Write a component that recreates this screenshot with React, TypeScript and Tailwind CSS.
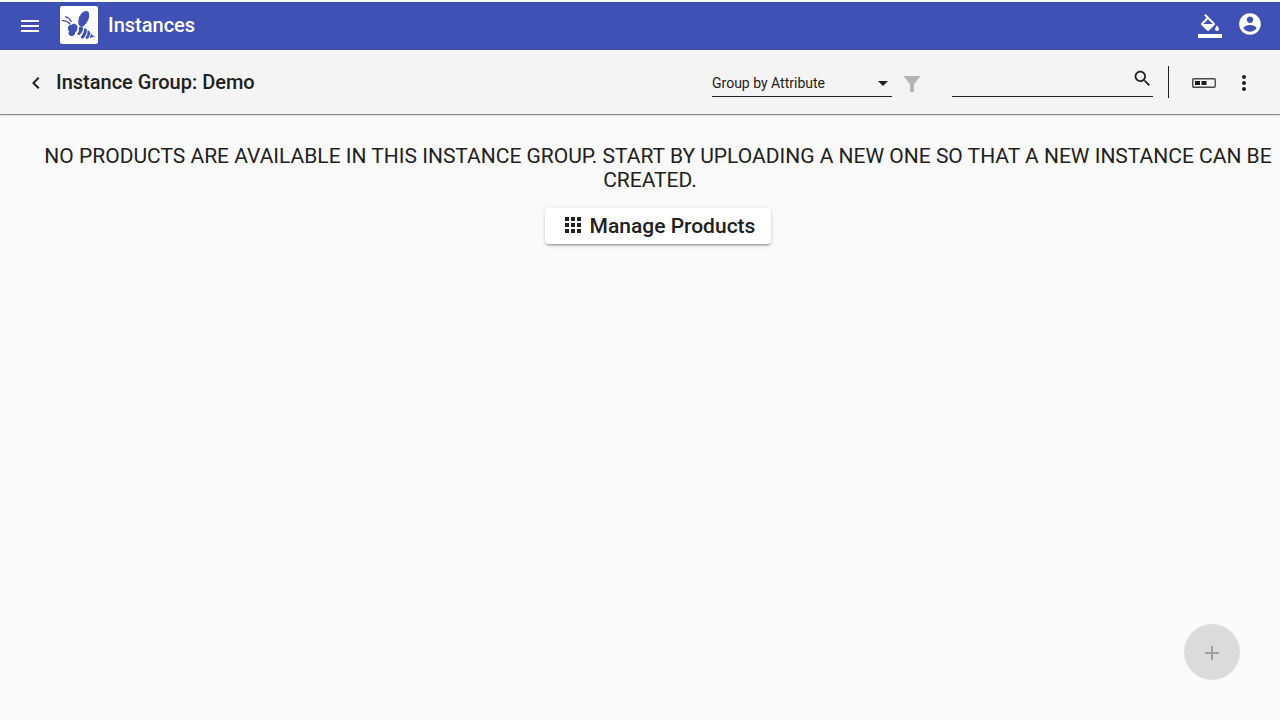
import type { ReactNode } from "react";

function Icon({ className, children }: { className: string; children: ReactNode }) {
  return (
    <svg viewBox="0 0 24 24" fill="currentColor" aria-hidden="true" className={`block shrink-0 ${className}`}>
      {children}
    </svg>
  );
}

function BeeLogo() {
  return (
    <svg viewBox="0 0 38 38" aria-hidden="true" className="block size-[38px] shrink-0">
      <rect width="38" height="38" rx="2" fill="#fff" />
      <g fill="#3f51b5">
        <path d="M20.600 20.800C18.200 19.400 17.800 16 18.800 12.600 19.900 8.600 23 5 26.400 5c2.400.2 3.200 2.600 2.700 5.800-.6 3.800-3.400 8-6.300 9.800-.8.400-1.600.500-2.200.2z" />
        <path d="M8.200 20.600c.6-1.400 2-1.800 3.200-1.600.8-1.200 2.600-1.600 4.200-.8 1.800 1 2.400 3.400 1.600 5.600-.4 1.200-1.200 2.200-2.200 2.800.2 1.600-.8 3.200-2.600 3.400-2 .2-3.800-1-4-2.600-.1-.8.400-1.200 1-1.400-1.400-1.200-1.800-3.400-1.200-5.400z" />
        <path d="M18.800 21.400c1.600-.6 4.200-.4 4.300 1.200.2 2.200-1.600 5-4 6.600-1 .2-1.900-.5-1.700-1.400 1.400-1.800 2-4 1.400-6.400z" />
        <path d="M24.200 22.200c1.500 0 2.700.9 2.700 2.200 0 2.800-1.500 5.800-3.600 8-1.300.2-2.800-.5-2.600-1.500 2.200-2.400 3.500-5.400 3.500-8.700z" />
        <path d="M27.600 24.200c1.500.5 2.500 1.500 2.500 2.800 0 2-.9 4.200-2.200 5.700-1.200.2-2.500-.4-2.400-1.200 1.500-2 2.200-4.400 2.100-7.300z" />
        <path d="M30.700 26.200c.6 2 2 3.600 4.900 4.400-2 .1-4.200.8-6 1.900.9-1.900 1.300-4 1.100-6.300z" />
      </g>
      <g fill="none" stroke="#3f51b5" strokeLinecap="round">
        <path d="M2.400 14.600c3-.2 5.600 1 7.600 3.400" strokeWidth="1.300" />
        <path d="M5.600 10.600c2.800 1 4.600 2.600 5.600 5" strokeWidth="1.300" />
      </g>
    </svg>
  );
}

function TopBar() {
  return (
    <header className="mt-0.5 flex h-12 items-center bg-[#3f51b5] pr-[17px] pl-[18px] text-white">
      <button type="button" aria-label="Open menu">
        <Icon className="size-6">
          <path d="M3 18h18v-2H3v2zm0-5h18v-2H3v2zm0-7v2h18V6H3z" />
        </Icon>
      </button>
      <div className="ml-[18px] flex items-center gap-2.5 pb-0.5">
        <BeeLogo />
        <h1 className="text-xl leading-6 font-medium">Instances</h1>
      </div>
      <div className="ml-auto flex items-center gap-[15px]">
        <button type="button" aria-label="Change theme">
          <Icon className="size-6">
            <path d="M16.56 8.94L7.62 0 6.21 1.41l2.38 2.38-5.15 5.15c-.59.59-.59 1.54 0 2.12l5.5 5.5c.29.29.68.44 1.06.44s.77-.15 1.06-.44l5.5-5.5c.59-.58.59-1.53 0-2.12zM5.21 10L10 5.21 14.79 10H5.21zM19 11.5s-2 2.17-2 3.5c0 1.1.9 2 2 2s2-.9 2-2c0-1.33-2-3.5-2-3.5zM0 20h24v4H0z" />
          </Icon>
        </button>
        <button type="button" aria-label="User account" className="pb-1">
          <Icon className="size-[26px]">
            <path d="M12 2C6.48 2 2 6.48 2 12s4.48 10 10 10 10-4.48 10-10S17.52 2 12 2zm0 3c1.66 0 3 1.34 3 3s-1.34 3-3 3-3-1.34-3-3 1.34-3 3-3zm0 14.2c-2.5 0-4.71-1.28-6-3.22.03-1.99 4-3.08 6-3.08 1.99 0 5.97 1.09 6 3.08-1.29 1.94-3.5 3.22-6 3.22z" />
          </Icon>
        </button>
      </div>
    </header>
  );
}

function Toolbar() {
  return (
    <div className="z-10 flex h-16 items-center bg-[#f4f4f4] pr-6 pl-6 shadow-[0_1px_1px_rgba(0,0,0,0.4),0_1px_3px_rgba(0,0,0,0.12)]">
      <button type="button" aria-label="Back" className="pt-0.5">
        <Icon className="size-6">
          <path d="M15.41 7.41L14 6l-6 6 6 6 1.41-1.41L10.83 12z" />
        </Icon>
      </button>
      <h2 className="ml-2 text-xl leading-6 font-medium">Instance Group: Demo</h2>

      <div className="ml-auto flex h-8 items-stretch">
        <div className="mb-px grid w-[180px] grid-cols-1 border-b border-[#212121]">
          <select
            aria-label="Group by Attribute"
            className="col-start-1 row-start-1 appearance-none bg-transparent pt-1 text-sm outline-none"
          >
            <option>Group by Attribute</option>
          </select>
          <svg
            viewBox="0 0 10 5"
            fill="currentColor"
            aria-hidden="true"
            className="pointer-events-none col-start-1 row-start-1 mt-[15px] mr-1 h-[5px] w-2.5 justify-self-end"
          >
            <path d="M0 0h10L5 5z" />
          </svg>
        </div>
        <button type="button" disabled aria-label="Filter" className="ml-3 pt-1 text-[#b4b4b4]">
          <svg viewBox="0 0 16 16" fill="currentColor" className="block size-4" aria-hidden="true">
            <path d="M.6 0h14.8c.6 0 .8.600.4 1.100L10 8.300V15.400c0 .4-.2.600-.6.600H6.600c-.4 0-.6-.2-.6-.6V8.300L.2 1.100C-.2.600 0 0 .6 0z" />
          </svg>
        </button>
        <div className="mb-px ml-8 flex w-[201px] border-b border-[#212121]">
          <input type="text" aria-label="Search" className="min-w-0 flex-1 bg-transparent text-sm outline-none" />
          <Icon className="mt-0.5 size-[21px]">
            <path d="M15.5 14h-.79l-.28-.27C15.410 12.590 16 11.110 16 9.500 16 5.910 13.090 3 9.500 3S3 5.910 3 9.500 5.910 16 9.500 16c1.610 0 3.090-.59 4.230-1.570l.27.28v.79l5 4.990L20.490 19l-4.990-5zm-6 0C7.010 14 5 11.990 5 9.500S7.010 5 9.500 5 14 7.010 14 9.500 11.990 14 9.500 14z" />
          </Icon>
        </div>
        <div className="ml-[15px] w-px bg-[#212121]" />
        <button type="button" aria-label="Banner" className="ml-[23px] pt-0.5">
          <svg viewBox="0 0 24 10" aria-hidden="true" className="block h-2.5 w-6">
            <rect x="0.75" y="0.75" width="22.500" height="8.500" rx="1" fill="none" stroke="#484848" strokeWidth="1.400" />
            <path d="M3 3h5v4H3zM9.500 3h5v4h-5z" fill="#1c1c1c" />
          </svg>
        </button>
        <button type="button" aria-label="More actions" className="ml-4 pt-0.5">
          <Icon className="size-6">
            <path d="M12 8c1.100 0 2-.9 2-2s-.9-2-2-2-2 .9-2 2 .9 2 2 2zm0 2c-1.100 0-2 .9-2 2s.9 2 2 2 2-.9 2-2-.9-2-2-2zm0 6c-1.100 0-2 .9-2 2s.9 2 2 2 2-.9 2-2-.9-2-2-2z" />
          </Icon>
        </button>
      </div>
    </div>
  );
}

export default function App() {
  return (
    <div className="flex min-h-screen flex-col bg-[#fafafa] font-['Roboto',sans-serif] text-[#212121] antialiased">
      <div className="bg-white">
        <TopBar />
      </div>
      <Toolbar />
      <main className="flex flex-col items-center pt-[30px] pl-9">
        <p className="text-center text-[21px] leading-6 uppercase">
          <span className="mr-4">
            No products are available in this instance group. Start by uploading a new one so that a new instance can be created.
          </span>
        </p>
        <button
          type="button"
          className="mt-4 flex h-9 items-center gap-[5px] rounded bg-white px-4 text-[21px] font-medium shadow-[0_3px_1px_-2px_rgba(0,0,0,0.2),0_2px_2px_0_rgba(0,0,0,0.14),0_1px_5px_0_rgba(0,0,0,0.12)]"
        >
          <Icon className="mb-0.5 size-6">
            <path d="M4 8h4V4H4v4zm6 12h4v-4h-4v4zm-6 0h4v-4H4v4zm0-6h4v-4H4v4zm6 0h4v-4h-4v4zm6-10v4h4V4h-4zm-6 4h4V4h-4v4zm6 6h4v-4h-4v4zm0 6h4v-4h-4v4z" />
          </Icon>
          <span className="pt-0.5">Manage Products</span>
        </button>
      </main>
      <button
        type="button"
        disabled
        aria-label="Add instance"
        className="mt-auto mr-10 mb-10 flex size-14 items-center justify-center self-end rounded-full bg-[#dbdbdb] pt-0.5 text-[#a0a0a0]"
      >
        <Icon className="size-6">
          <path d="M19 13h-6v6h-2v-6H5v-2h6V5h2v6h6v2z" />
        </Icon>
      </button>
    </div>
  );
}
